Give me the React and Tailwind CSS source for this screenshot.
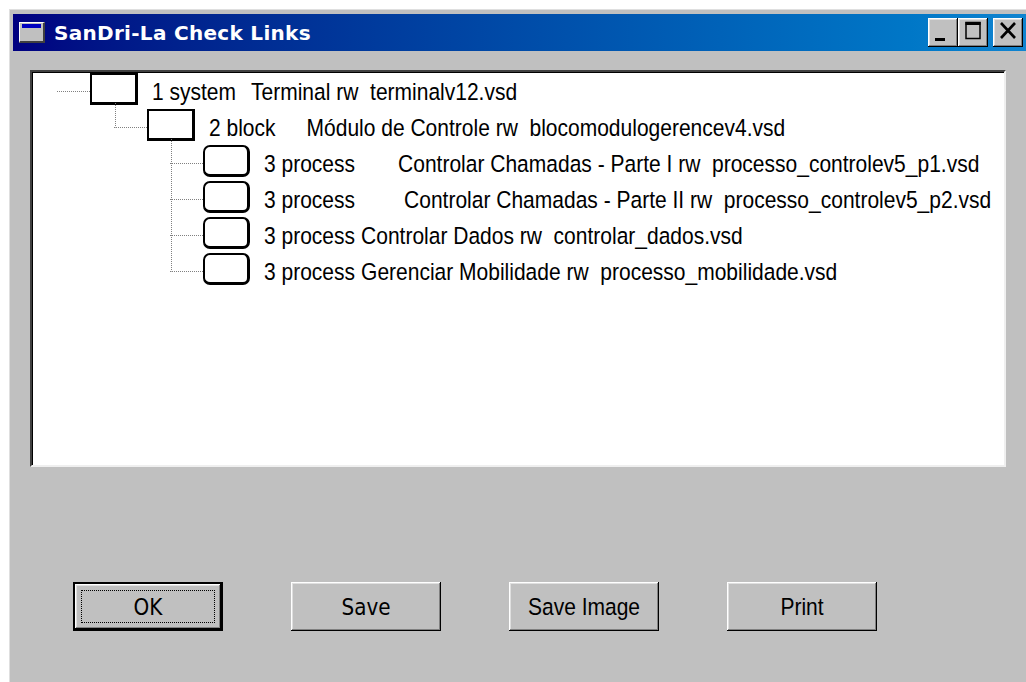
import React from 'react';

// Tree rows shown in the link checker. Each node has a kind, a description and
// a gap class that spaces the description the way the original control does.
const rows = [
  { level: 0, shape: 'rect', kind: '1 system', rest: 'Terminal rw  terminalv12.vsd', gap: 'ml-[15px]', last: true },
  { level: 1, shape: 'rect', kind: '2 block', rest: 'Módulo de Controle rw  blocomodulogerencev4.vsd', gap: 'ml-[31px]', last: true },
  { level: 2, shape: 'round', kind: '3 process', rest: 'Controlar Chamadas - Parte I rw  processo_controlev5_p1.vsd', gap: 'ml-[43px]' },
  { level: 2, shape: 'round', kind: '3 process', rest: 'Controlar Chamadas - Parte II rw  processo_controlev5_p2.vsd', gap: 'ml-[49px]' },
  { level: 2, shape: 'round', kind: '3 process', rest: 'Controlar Dados rw  controlar_dados.vsd', gap: 'ml-[6px]' },
  { level: 2, shape: 'round', kind: '3 process', rest: 'Gerenciar Mobilidade rw  processo_mobilidade.vsd', gap: 'ml-[6px]', last: true },
];

const boxLeft = [57, 114, 170];
const ROW_H = 36;

function Connector({ level, last }) {
  const left = boxLeft[level];
  const mid = ROW_H / 2 + 0.5;
  const vx = left - 32 + 0.5;
  return (
    <svg width={left} height={ROW_H} className="shrink-0 overflow-visible">
      <line x1={left - 33} y1={mid} x2={left} y2={mid} stroke="#808080" strokeDasharray="1 1" />
      {level > 0 && (
        <line x1={vx} y1={-6} x2={vx} y2={last ? mid : ROW_H} stroke="#808080" strokeDasharray="1 1" />
      )}
    </svg>
  );
}

function NodeBox({ shape }) {
  if (shape === 'round') {
    return <div className="mb-[5px] h-[32px] w-[47px] shrink-0 rounded-[7px] border-2 border-r-[3px] border-b-[3px] border-black bg-white" />;
  }
  return <div className="mb-[5px] h-[32px] w-[48px] shrink-0 border-2 border-r-[3px] border-b-[3px] border-black bg-white" />;
}

function TitleButton({ children, className = '' }) {
  return (
    <div
      className={
        'flex h-[29px] w-[30px] items-center justify-center bg-[#c0c0c0] shadow-[inset_-1px_-1px_#000,inset_1px_1px_#fff,inset_-2px_-2px_#808080,inset_2px_2px_#dfdfdf] ' +
        className
      }
    >
      {children}
    </div>
  );
}

function DialogButton({ label, isDefault, font }) {
  const text = <span className="inline-block scale-y-[1.15]">{label}</span>;
  return (
    <div className={isDefault ? 'border-2 border-black' : ''}>
      <div
        className={
          'flex items-center justify-center bg-[#c0c0c0] text-black shadow-[inset_-1px_-1px_#000,inset_1px_1px_#fff,inset_-2px_-2px_#808080,inset_2px_2px_#dfdfdf] ' +
          (isDefault ? 'h-[45px] w-[146px] p-[6px]' : 'h-[49px] w-[150px]') +
          ' ' +
          font
        }
      >
        {isDefault ? (
          <div className="flex h-full w-full items-center justify-center border border-dotted border-black">{text}</div>
        ) : (
          text
        )}
      </div>
    </div>
  );
}

export default function App() {
  return (
    <div className="h-[682px] w-[1026px] overflow-hidden bg-white pl-[9px] pt-[9px]">
      <div className="h-[700px] w-[1017px] border-l border-t border-[#dfdfdf] bg-[#c0c0c0] pl-[3px] pt-[4px]">
        {/* title bar */}
        <div className="flex h-[37px] items-center bg-linear-to-r from-[#000080] to-[#1084d0] pr-[3px]">
          <div className="ml-[6px] flex h-[21px] w-[26px] flex-col border-t border-l border-white border-r-2 border-b-2 border-r-[#404040] border-b-[#404040] bg-[#c0c0c0] px-[2px] pt-[1px]">
            <div className="h-[4px] w-full bg-[#0000c0]" />
          </div>
          <span className="ml-[9px] font-['DejaVu_Sans',sans-serif] text-[20px] font-bold tracking-[0.3px] text-white">
            SanDri-La Check Links
          </span>
          <div className="ml-auto flex items-center">
            <TitleButton>
              <svg width="30" height="29">
                <rect x="7" y="20" width="10" height="3" fill="#000" />
              </svg>
            </TitleButton>
            <TitleButton>
              <svg width="30" height="29">
                <rect x="8" y="4.5" width="14" height="16" fill="none" stroke="#000" strokeWidth="1.5" />
                <rect x="7.5" y="4" width="15" height="3" fill="#000" />
              </svg>
            </TitleButton>
            <TitleButton className="ml-[5px]">
              <svg width="30" height="29">
                <path d="M8 5 L22 20 M22 5 L8 20" stroke="#000" strokeWidth="2.6" />
              </svg>
            </TitleButton>
          </div>
        </div>

        {/* tree panel */}
        <div className="ml-[17px] mt-[19px] h-[397px] w-[976px] border-l-2 border-t-2 border-l-[#404040] border-t-[#404040] border-b-2 border-r-2 border-b-[#efefef] border-r-[#efefef] bg-white">
          <div className="flex h-full flex-col border-l border-t border-black font-['Liberation_Sans',Arial,sans-serif] text-[21px] leading-none text-black">
            {rows.map((row, i) => (
              <div key={i} className="flex h-[36px] items-center">
                <Connector level={row.level} last={row.last} />
                <NodeBox shape={row.shape} />
                <span className="ml-[14px] inline-block scale-y-[1.12] whitespace-pre">
                  {row.kind}
                  <span className={'inline-block ' + row.gap}>{row.rest}</span>
                </span>
              </div>
            ))}
          </div>
        </div>

        {/* dialog buttons */}
        <div className="ml-[60px] mt-[115px] flex gap-[68px]">
          <DialogButton label="OK" isDefault font="font-['DejaVu_Sans',sans-serif] text-[20px]" />
          <DialogButton label="Save" font="font-['DejaVu_Sans',sans-serif] text-[20px]" />
          <DialogButton label="Save Image" font="font-['Liberation_Sans',Arial,sans-serif] text-[21px]" />
          <DialogButton label="Print" font="font-['Liberation_Sans',Arial,sans-serif] text-[21px]" />
        </div>
      </div>
    </div>
  );
}
